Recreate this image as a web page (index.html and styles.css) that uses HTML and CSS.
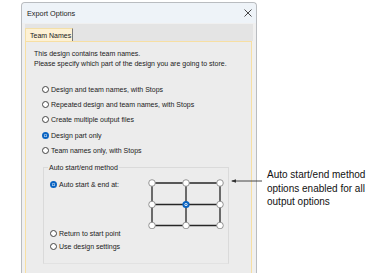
FILE: index.html
```html
<!DOCTYPE html>
<html>
<head>
<meta charset="utf-8">
<link rel="stylesheet" href="styles.css">
</head>
<body>
<div class="page">
  <div class="dialog">
    <div class="titlebar">
      <span class="title">Export Options</span>
      <svg class="close" width="8" height="8" viewBox="0 0 8 8"><path d="M0.5 0.5 L7.5 7.5 M7.5 0.5 L0.5 7.5" stroke="#333" stroke-width="0.9" fill="none"/></svg>
    </div>
    <div class="tabs"><div class="tab">Team Names</div></div>
    <div class="panel">
      <p class="intro">This design contains team names.<br>Please specify which part of the design you are going to store.</p>
      <div class="radios">
        <div class="radio"><span class="dot"></span>Design and team names, with Stops</div>
        <div class="radio"><span class="dot"></span>Repeated design and team names, with Stops</div>
        <div class="radio"><span class="dot"></span>Create multiple output files</div>
        <div class="radio"><span class="dot on"></span>Design part only</div>
        <div class="radio"><span class="dot"></span>Team names only, with Stops</div>
      </div>
      <div class="group">
        <div class="legend">Auto start/end method</div>
        <div class="group-top">
          <div class="radio"><span class="dot on"></span>Auto start &amp; end at:</div>
          <svg class="grid" width="80" height="50" viewBox="0 0 80 50">
            <g stroke="#262626" stroke-width="1.3" fill="none">
              <path d="M6 4 H74 M6 25.5 H74 M6 46.5 H74"/>
              <path d="M6 4 V46.5 M40 4 V46.5 M74 4 V46.5"/>
            </g>
            <g fill="#fff" stroke="#8a8a8a" stroke-width="0.9">
              <circle cx="6" cy="4" r="3.3"/><circle cx="40" cy="4" r="3.3"/><circle cx="74" cy="4" r="3.3"/>
              <circle cx="6" cy="25.5" r="3.3"/><circle cx="74" cy="25.5" r="3.3"/>
              <circle cx="6" cy="46.5" r="3.3"/><circle cx="40" cy="46.5" r="3.3"/><circle cx="74" cy="46.5" r="3.3"/>
            </g>
            <circle cx="40" cy="25.5" r="3.6" fill="#0a64c2"/>
            <circle cx="40" cy="25.5" r="1.5" fill="#fff"/>
            <circle cx="40" cy="25.5" r="0.8" fill="#0a64c2"/>
          </svg>
        </div>
        <div class="radio low"><span class="dot"></span>Return to start point</div>
        <div class="radio low"><span class="dot"></span>Use design settings</div>
      </div>
    </div>
  </div>
  <div class="note">
    <svg class="arrow" width="32" height="6" viewBox="0 0 32 6"><path d="M1 3 H31" stroke="#333" stroke-width="0.9"/><path d="M0 3 L5 1.2 L5 4.8 Z" fill="#333"/></svg>
    <div class="note-text">Auto start/end method<br>options enabled for all<br>output options</div>
  </div>
</div>
</body>
</html>
```
FILE: styles.css
```css
html, body {
  margin: 0;
  padding: 0;
  background: #fff;
}
.page {
  position: relative;
  display: flex;
  align-items: flex-start;
  padding: 2px 0 0 21px;
  height: 271px;
  overflow: hidden;
  font-family: "Liberation Sans", Arial, sans-serif;
}
.dialog {
  width: 234px;
  height: 290px;
  border: 1px solid #b9bcc0;
  border-bottom: none;
  border-radius: 4px 4px 0 0;
  background: #f0f0f0;
  display: flex;
  flex-direction: column;
  font-size: 7px;
  color: #1a1a1a;
}
.titlebar {
  height: 20px;
  background: #eef3f8;
  display: flex;
  align-items: center;
  justify-content: space-between;
  padding: 0 4px 0 5px;
  border-radius: 4px 4px 0 0;
}
.title {
  font-size: 7.3px;
  color: #222;
}
.close { display: block; }
.tabs {
  margin: 1px 3px 0 3px;
  height: 17px;
  background: #e4e4e4;
  display: flex;
  align-items: flex-end;
}
.tab {
  height: 13px;
  width: 48px;
  padding-left: 4px;
  box-sizing: border-box;
  background: #fdf1d4;
  border-top: 1px solid #f3dfa8;
  border-left: 1px solid #f3dfa8;
  border-right: 1px solid #7a7a7a;
  display: flex;
  align-items: center;
  white-space: nowrap;
  font-size: 7px;
}
.panel {
  flex: 1;
  margin: 0 4px 0 3px;
  background: #ececec;
  border: 1.5px solid #f7dfa3;
  border-bottom: none;
  padding: 7px 0 0 8px;
}
.intro {
  margin: 0;
  line-height: 10px;
}
.radios {
  margin-top: 13px;
  padding-left: 8px;
  display: flex;
  flex-direction: column;
}
.radio {
  display: flex;
  align-items: center;
  height: 15.2px;
  white-space: nowrap;
}
.dot {
  width: 7px;
  height: 7px;
  box-sizing: border-box;
  border: 1px solid #444;
  border-radius: 50%;
  background: #fff;
  margin-right: 2px;
  flex: none;
}
.dot.on {
  border: 2px solid #0a64c2;
  background: radial-gradient(circle, #0a64c2 0 0.9px, #fff 1.1px);
}
.group {
  position: relative;
  margin: 9px 0 0 9px;
  width: 186px;
  height: 97px;
  box-sizing: border-box;
  border: 1px solid #dadada;
  border-bottom: 1px solid #e2e2e2;
  padding: 10px 0 0 6px;
}
.legend {
  position: absolute;
  top: -5px;
  left: 4px;
  background: #ececec;
  padding: 0 1px;
  line-height: 9px;
}
.group-top {
  display: flex;
  align-items: flex-start;
  height: 49px;
}
.group-top .radio {
  height: 14px;
}
.grid {
  display: block;
  margin-left: 27px;
  margin-top: 1px;
}
.radio.low {
  height: 13px;
}
.note {
  display: flex;
  align-items: flex-start;
}
.arrow {
  position: absolute;
  left: 231px;
  top: 178px;
}
.note-text {
  margin: 166px 0 0 10px;
  font-size: 10px;
  line-height: 13.5px;
  color: #111;
}
```
